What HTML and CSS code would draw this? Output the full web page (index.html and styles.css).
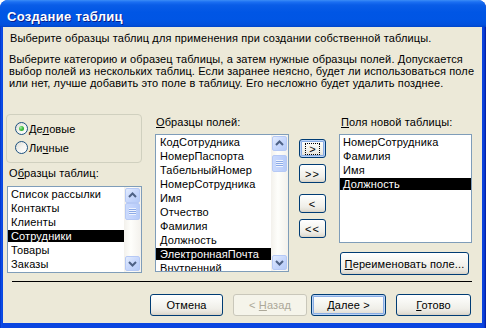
FILE: index.html
```html
<!DOCTYPE html>
<html lang="ru">
<head>
<meta charset="utf-8">
<title>Создание таблиц</title>
<link rel="stylesheet" href="styles.css">
</head>
<body>
<div class="window">
  <div class="titlebar"><span class="title">Создание таблиц</span></div>
  <div class="client">
    <div class="header">Выберите образцы таблиц для применения при создании собственной таблицы.</div>
    <p class="intro">
      <span class="line">Выберите категорию и образец таблицы, а затем нужные образцы полей. Допускается</span>
      <span class="line">выбор полей из нескольких таблиц. Если заранее неясно, будет ли использоваться поле</span>
      <span class="line">или нет, лучше добавить это поле в таблицу. Его несложно будет удалить позднее.</span>
    </p>
    <div class="main">
      <div class="col col-left">
        <div class="groupbox">
          <div class="radio"><span class="radio-dot checked"></span><span>Де<u>л</u>овые</span></div>
          <div class="radio"><span class="radio-dot"></span><span>Ли<u>ч</u>ные</span></div>
        </div>
        <div class="label lbl-tables">О<u>б</u>разцы таблиц:</div>
        <div class="listbox list-tables">
          <ul class="items">
            <li>Список рассылки</li>
            <li>Контакты</li>
            <li>Клиенты</li>
            <li class="sel">Сотрудники</li>
            <li>Товары</li>
            <li>Заказы</li>
          </ul>
          <div class="scrollbar">
            <div class="sb-btn"><svg width="15" height="15" viewBox="0 0 15 15"><polyline points="4,9 7.5,5.5 11,9" fill="none" stroke="#4d6185" stroke-width="2"/></svg></div>
            <div class="sb-track"><div class="sb-thumb thumb-top"><span class="grip"></span></div></div>
            <div class="sb-btn"><svg width="15" height="15" viewBox="0 0 15 15"><polyline points="4,6 7.5,9.5 11,6" fill="none" stroke="#4d6185" stroke-width="2"/></svg></div>
          </div>
        </div>
      </div>
      <div class="col col-mid">
        <div class="label lbl-fields"><u>О</u>бразцы полей:</div>
        <div class="listbox list-fields">
          <ul class="items">
            <li>КодСотрудника</li>
            <li>НомерПаспорта</li>
            <li>ТабельныйНомер</li>
            <li>НомерСотрудника</li>
            <li>Имя</li>
            <li>Отчество</li>
            <li>Фамилия</li>
            <li>Должность</li>
            <li class="sel">ЭлектроннаяПочта</li>
            <li>Внутренний</li>
          </ul>
          <div class="scrollbar">
            <div class="sb-btn"><svg width="15" height="15" viewBox="0 0 15 15"><polyline points="4,9 7.5,5.5 11,9" fill="none" stroke="#4d6185" stroke-width="2"/></svg></div>
            <div class="sb-track"><div class="sb-thumb thumb-near"><span class="grip"></span></div></div>
            <div class="sb-btn"><svg width="15" height="15" viewBox="0 0 15 15"><polyline points="4,6 7.5,9.5 11,6" fill="none" stroke="#4d6185" stroke-width="2"/></svg></div>
          </div>
        </div>
      </div>
      <div class="col col-moves">
        <button class="btn small focus"><span class="focus-rect">&gt;</span></button>
        <button class="btn small gap-s">&gt;&gt;</button>
        <button class="btn small gap-l">&lt;</button>
        <button class="btn small gap-s">&lt;&lt;</button>
      </div>
      <div class="col col-right">
        <div class="label lbl-new"><u>П</u>оля новой таблицы:</div>
        <div class="listbox list-new">
          <ul class="items">
            <li>НомерСотрудника</li>
            <li>Фамилия</li>
            <li>Имя</li>
            <li class="sel">Должность</li>
          </ul>
        </div>
        <button class="btn rename"><span><u>П</u>ереименовать поле...</span></button>
      </div>
    </div>
    <div class="separator"></div>
    <div class="footer">
      <button class="btn b-cancel"><span>Отмена</span></button>
      <button class="btn b-back disabled"><span>&lt; <u>Н</u>азад</span></button>
      <button class="btn b-next default"><span><u>Д</u>алее &gt;</span></button>
      <button class="btn b-finish"><span><u>Г</u>отово</span></button>
    </div>
  </div>
</div>
</body>
</html>
```

FILE: styles.css
```css
* { box-sizing: border-box; }
html, body { margin: 0; padding: 0; }
body {
  width: 486px;
  height: 328px;
  overflow: hidden;
  background: #ffffff;
  font-family: "Liberation Sans", Arial, sans-serif;
  font-size: 11px;
  letter-spacing: 0.12px;
  color: #000;
}
.window {
  width: 486px;
  height: 328px;
  border-radius: 8px 8px 0 0;
  overflow: hidden;
  display: flex;
  flex-direction: column;
  background: linear-gradient(to right, #0026b8 0, #0b4ee8 1px, #0a45e0 3px, #0a45e0 calc(100% - 4px), #0b3fd8 calc(100% - 2px), #00199c 100%);
}
.titlebar {
  height: 27px;
  flex: none;
  padding: 9px 0 0 7px;
  background: linear-gradient(to bottom, #3c8df6 0, #1b6ff2 2px, #0a5de7 5px, #0056e5 12px, #0055e4 20px, #0250dc 25px, #0045c8 27px);
}
.title {
  display: block;
  font-weight: bold;
  font-size: 13px;
  line-height: 15px;
  color: #fff;
  letter-spacing: 0.3px;
  text-shadow: 1px 1px 0 #0a1e8a;
}
.client {
  flex: 1;
  margin: 0 4px 5px 3px;
  background: #ece9d8;
  padding-top: 5px;
}
.header {
  margin-left: 7px;
  line-height: 12px;
  height: 12px;
  white-space: nowrap;
}
.intro {
  margin: 9px 0 0 6px;
  line-height: 12px;
}
.line { display: block; white-space: nowrap; }
.main {
  margin-top: 25px;
  padding-left: 3px;
  height: 161px;
  display: flex;
  align-items: flex-start;
}
.col { display: flex; flex-direction: column; }
.col-left { width: 136px; }
.col-mid { width: 134px; margin-left: 13px; }
.col-moves { width: 27px; margin-left: 10px; padding-top: 25px; }
.col-right { width: 133px; margin-left: 13px; }

.groupbox {
  width: 136px;
  height: 49px;
  border: 1px solid #d0d0bf;
  border-radius: 4px;
  padding: 4px 0 0 8px;
}
.radio {
  height: 19px;
  display: flex;
  align-items: center;
  white-space: nowrap;
}
.radio-dot {
  width: 13px;
  height: 13px;
  border: 1px solid #1c5180;
  border-radius: 50%;
  background: linear-gradient(135deg, #dcdcd4 0%, #f4f4f0 50%, #ffffff 100%);
  margin-right: 1px;
  display: flex;
  align-items: center;
  justify-content: center;
}
.radio-dot.checked::after {
  content: "";
  width: 5px;
  height: 5px;
  border-radius: 50%;
  background: radial-gradient(circle at 35% 35%, #a9eda9 0%, #42c142 45%, #1d9a1d 100%);
}
.label {
  line-height: 12px;
  height: 12px;
  white-space: nowrap;
}
.lbl-tables { margin: 4px 0 0 3px; }
.lbl-fields { margin: 2px 0 0 1px; }
.lbl-new { margin: 2px 0 0 2px; }

.listbox {
  border: 1px solid #7f9db9;
  background: #fff;
  display: flex;
  overflow: hidden;
}
.list-tables { margin: 7px 0 0 1px; width: 135px; height: 87px; }
.list-fields { margin-top: 6px; width: 134px; height: 138px; }
.list-new { margin-top: 6px; width: 133px; height: 109px; }

.items {
  flex: 1;
  list-style: none;
  margin: 0;
  padding: 0;
  min-width: 0;
}
.items li {
  height: 14px;
  line-height: 14px;
  padding-left: 3px;
  white-space: nowrap;
  overflow: hidden;
}
.list-fields .items li { padding-left: 4px; }
.items li.sel {
  color: #fff;
  background: linear-gradient(#000, #000) no-repeat 0 1px / 100% 12px;
}

.scrollbar {
  width: 17px;
  flex: none;
  display: flex;
  flex-direction: column;
  padding: 1px;
  background: linear-gradient(to right, #f3f1ec 0, #fefefb 40%, #f3f1ec 100%);
}
.sb-btn {
  width: 15px;
  height: 15px;
  flex: none;
  border: 1px solid #b6c9f5;
  border-radius: 2px;
  background: linear-gradient(135deg, #e3ecfe 0%, #c8d8fc 50%, #b6cbf8 100%);
  display: flex;
  align-items: center;
  justify-content: center;
}
.sb-btn svg { display: block; margin: -1px; }
.sb-track { flex: 1; display: flex; flex-direction: column; }
.sb-thumb {
  height: 17px;
  border: 1px solid #b6c9f5;
  border-radius: 2px;
  background: linear-gradient(to right, #cadafc 0%, #c2d3fc 50%, #b6cbf8 100%);
  display: flex;
  align-items: center;
  justify-content: center;
}
.thumb-top { margin-top: 0; }
.thumb-near { margin-top: 4px; }
.grip {
  width: 7px;
  height: 7px;
  background: repeating-linear-gradient(to bottom, #eef3fe 0, #eef3fe 1px, #8caae6 1px, #8caae6 2px);
}

.btn {
  font-family: inherit;
  font-size: 11px;
  letter-spacing: 0.12px;
  color: #000;
  border: 1px solid #003c74;
  border-radius: 3px;
  background: linear-gradient(to bottom, #ffffff 0%, #f7f7f3 35%, #efeee8 70%, #e3e0d6 90%, #d6d0c5 100%);
  padding: 0;
  margin: 0;
  display: flex;
  align-items: center;
  justify-content: center;
  white-space: nowrap;
}
.btn.small { width: 27px; height: 19px; letter-spacing: 1px; }
.btn.small.focus { letter-spacing: 0; }
.gap-s { margin-top: 6px; }
.gap-l { margin-top: 11px; }
.btn.focus, .btn.default {
  box-shadow: inset 0 0 0 1px #bcd4f6, inset 0 0 0 2px #89ade4;
}
.focus-rect {
  outline: 1px dotted #000;
  padding: 0 3px;
  line-height: 10px;
}
.rename { margin: 9px 0 0 1px; width: 129px; height: 23px; }

.separator {
  margin: 6px 0 0 9px;
  width: 460px;
  height: 1px;
  background: #000;
}
.footer {
  margin-top: 12px;
  padding-left: 147px;
  display: flex;
}
.footer .btn { height: 22px; }
.b-cancel { width: 73px; margin-right: 10px; }
.b-back { width: 74px; margin-right: 4px; }
.b-next { width: 75px; margin-right: 10px; }
.b-finish { width: 75px; }
.btn.disabled {
  border-color: #c9c7ba;
  color: #aca899;
  background: #f5f4ea;
}
```
